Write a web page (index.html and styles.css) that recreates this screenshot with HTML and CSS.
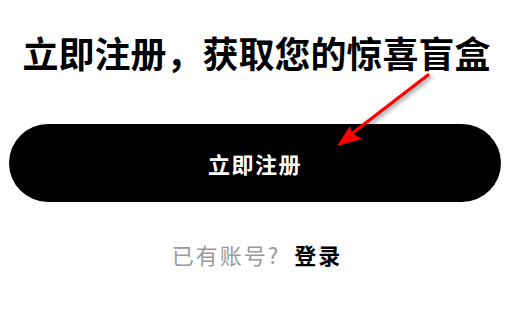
FILE: index.html
```html
<!DOCTYPE html>
<html lang="zh-CN">
<head>
<meta charset="utf-8">
<link rel="stylesheet" href="styles.css">
</head>
<body>
<main class="page">
  <h1 class="title">立即注册，获取您的惊喜盲盒</h1>
  <button class="register-btn">立即注册</button>
  <p class="login-line"><span class="muted">已有账号?</span><a class="login-link">登录</a></p>
  <svg class="arrow" width="510" height="311" viewBox="0 0 510 311">
    <line x1="428" y1="75" x2="350" y2="135" stroke="#f00" stroke-width="3.2" stroke-linecap="round"/>
    <polygon points="337,146 350,126 352,133 362,139" fill="#f00"/>
  </svg>
</main>
</body>
</html>
```

FILE: styles.css
```css
html, body {
  margin: 0;
  padding: 0;
  background: #fff;
}
.page {
  position: relative;
  width: 510px;
  height: 311px;
  display: flex;
  flex-direction: column;
  align-items: center;
  padding-top: 31px;
  box-sizing: border-box;
  font-family: "Noto Sans CJK SC", "Noto Sans", sans-serif;
}
.title {
  margin: 0;
  font-size: 36px;
  line-height: 43px;
  font-weight: 700;
  color: #000;
  padding-left: 3px;
}
.register-btn {
  margin-top: 50px;
  align-self: stretch;
  margin-left: 9px;
  margin-right: 9px;
  height: 78px;
  border: none;
  border-radius: 39px;
  background: #000;
  color: #fff;
  font-family: inherit;
  font-size: 22px;
  font-weight: 700;
  letter-spacing: 1.5px;
}
.login-line {
  margin: 37px 0 0;
  padding-left: 4px;
  font-size: 22px;
  line-height: 30px;
  display: flex;
  gap: 14px;
  letter-spacing: 2px;
}
.muted {
  color: #9a9a9a;
}
.login-link {
  color: #000;
  font-weight: 700;
}
.arrow {
  position: absolute;
  left: 0;
  top: 0;
  pointer-events: none;
  filter: drop-shadow(2px 2px 2px rgba(0,0,0,0.45));
}
```
